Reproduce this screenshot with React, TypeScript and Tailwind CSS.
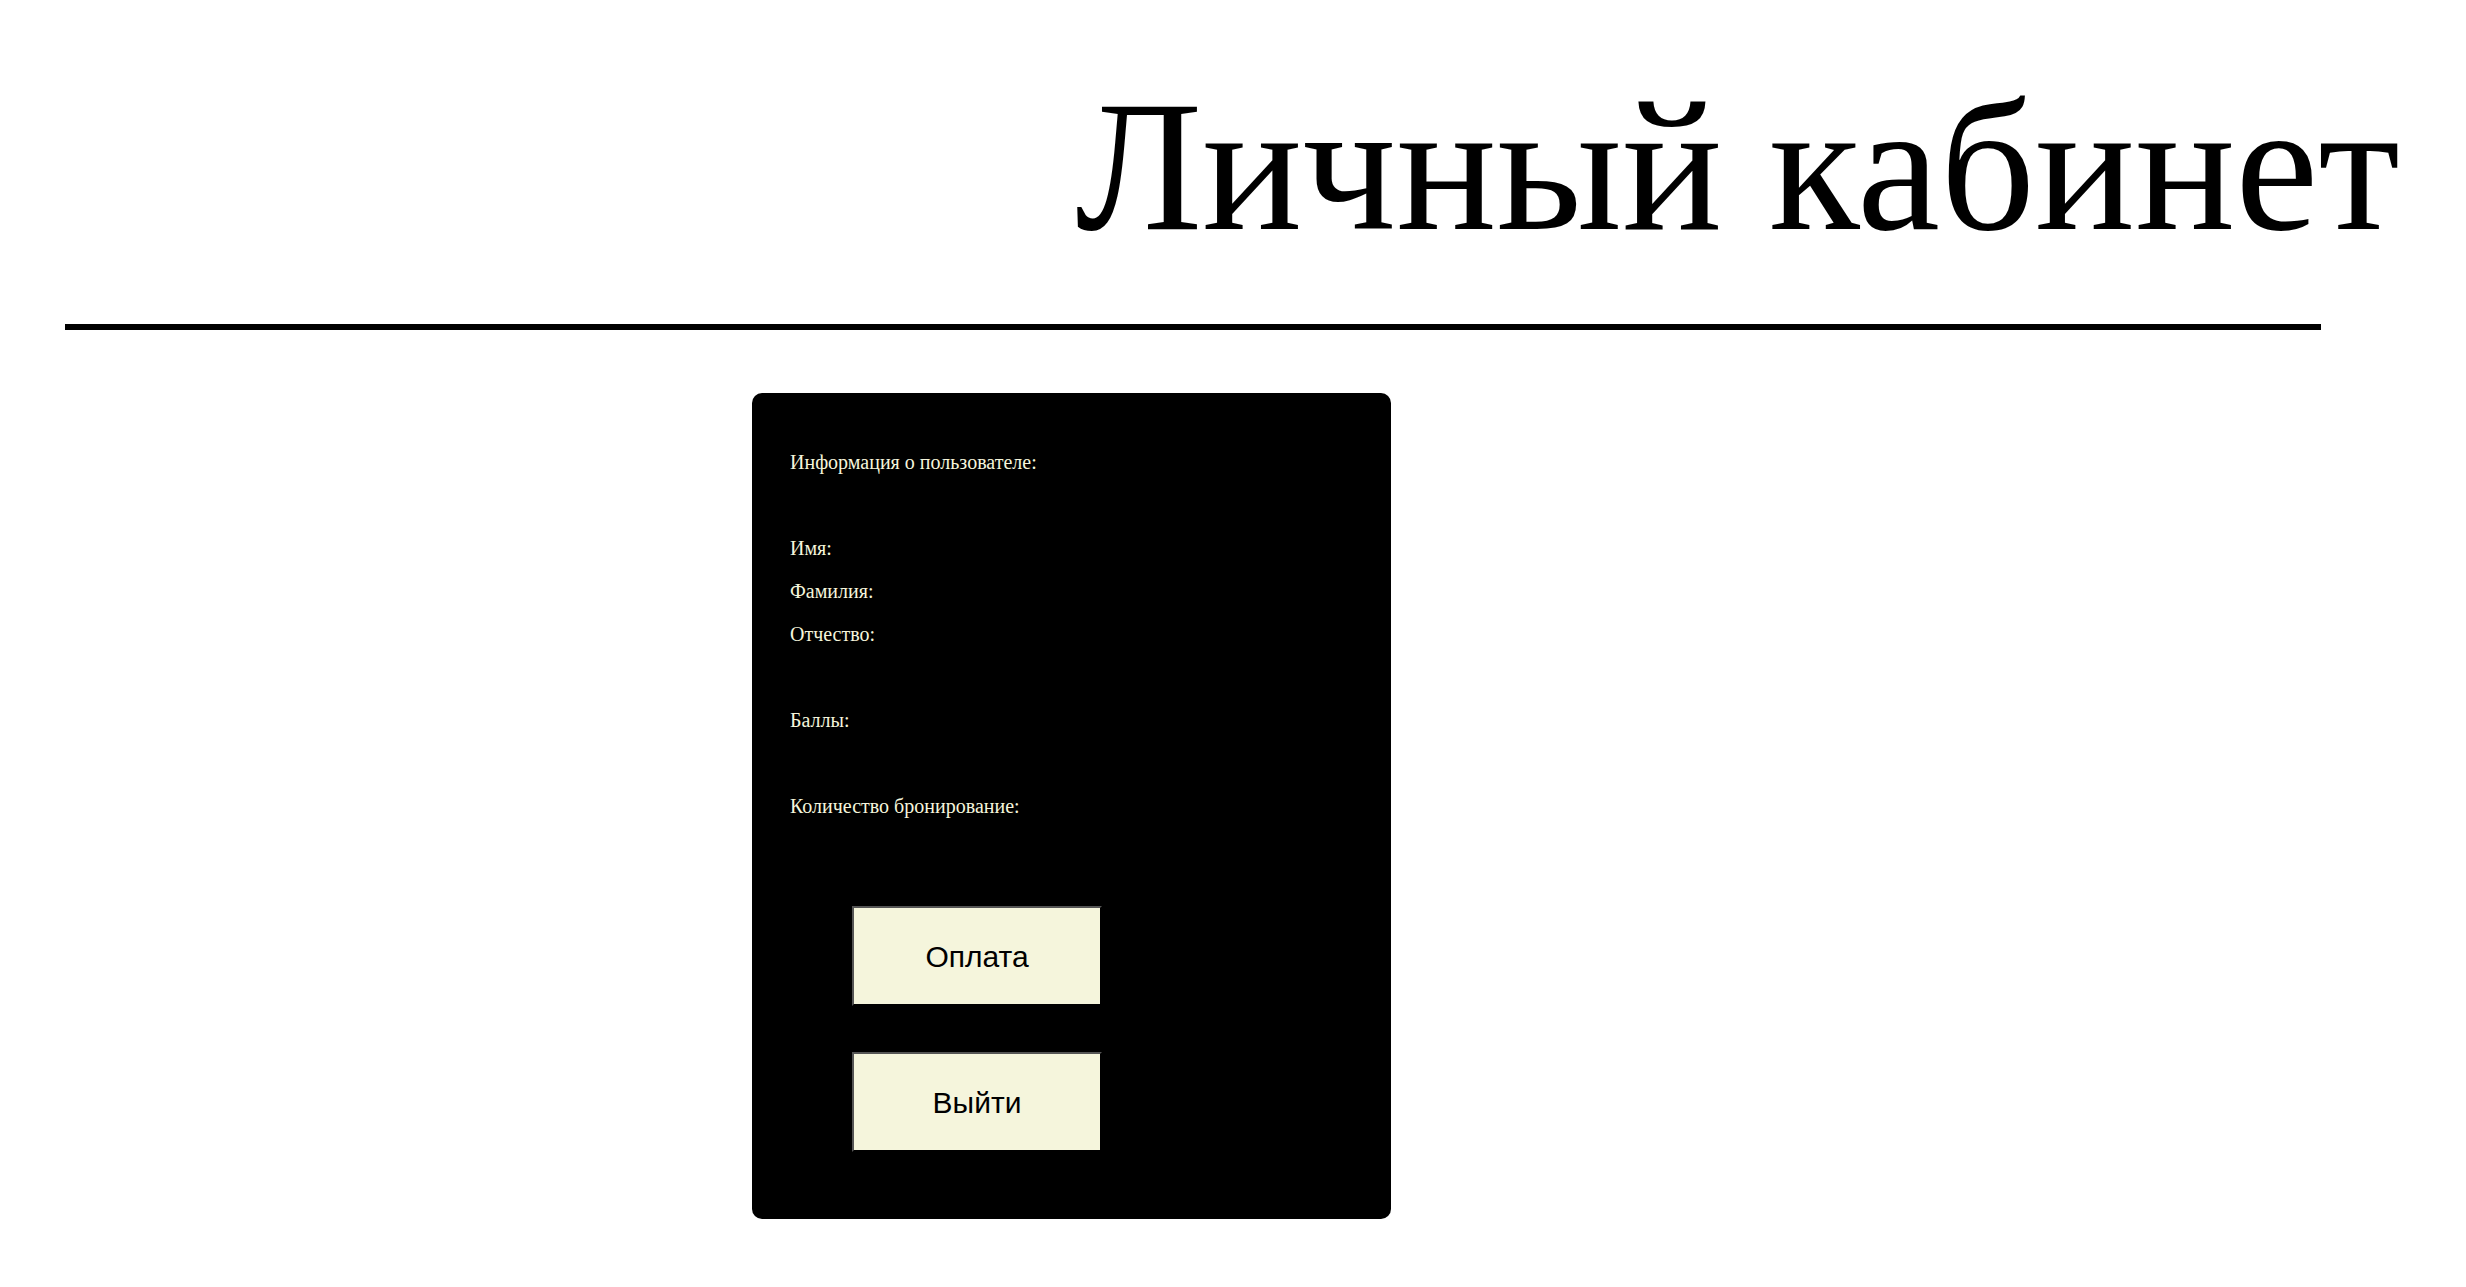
import React from "react";

export default function App() {
  const serif = { fontFamily: '"Liberation Serif", "Times New Roman", serif' };
  return (
    <div className="min-h-screen w-full bg-white" style={serif}>
      <h1 className="m-0 pt-[58px] pr-[66px] text-right text-[187px] font-normal leading-[216px] text-black">
        Личный кабинет
      </h1>
      <div className="ml-[65px] mt-[50px] h-[6px] w-[2256px] bg-black" />
      <div className="ml-[752px] mt-[63px] w-[639px] rounded-[10px] bg-black pb-[67px] pl-[38px] pt-[58px] text-[20px] leading-[23px] text-[#f5f5dc]">
        <div className="flex flex-col gap-[20px]">
          <div>Информация о пользователе:</div>
          <div className="h-[23px]" />
          <div>Имя:</div>
          <div>Фамилия:</div>
          <div>Отчество:</div>
          <div className="h-[23px]" />
          <div>Баллы:</div>
          <div className="h-[23px]" />
          <div>Количество бронирование:</div>
        </div>
        <div
          className="ml-[62px] mt-[88px] flex flex-col gap-[46px]"
          style={{ fontFamily: '"Liberation Sans", Arial, sans-serif' }}
        >
          <button className="h-[100px] w-[250px] border-2 border-t-[#555555] border-l-[#555555] border-r-black border-b-black bg-[#f5f5dc] text-[30px] text-black">
            Оплата
          </button>
          <button className="h-[100px] w-[250px] border-2 border-t-[#555555] border-l-[#555555] border-r-black border-b-black bg-[#f5f5dc] text-[30px] text-black">
            Выйти
          </button>
        </div>
      </div>
    </div>
  );
}
